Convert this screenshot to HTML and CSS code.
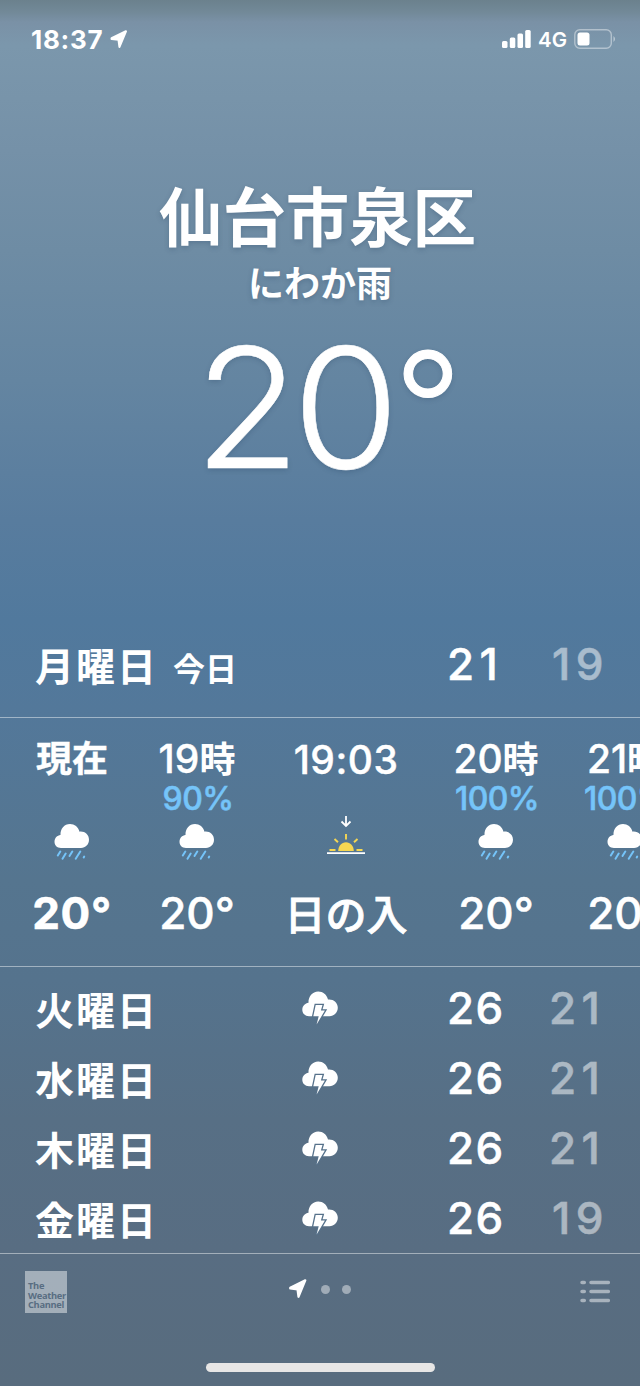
FILE: index.html
```html
<!DOCTYPE html>
<html lang="ja">
<head>
<meta charset="utf-8">
<title>天気</title>
<link rel="stylesheet" href="styles.css">
</head>
<body>
<svg class="defs" width="0" height="0" aria-hidden="true">
  <symbol id="arrow" viewBox="0 0 18 20"><path d="M1.200 8.700 16.300 1.300 9.500 17.800 8.500 10.300 1.200 9.400Z" fill="#fff" stroke="#fff" stroke-width="2.200" stroke-linejoin="round"/></symbol>
  <symbol id="rain" viewBox="0 0 36 38">
    <path d="M7 25C3 25 .5 22.300.5 18.800.5 15 3.200 12.300 6.500 12 6.200 5.800 10.300 1 16 1 20.600 1 24.300 4 25.500 8.700 30.500 8 35 11.500 35 16.800 35 21.500 31.500 25 27 25Z" fill="#fff"/>
    <path d="M6.300 28.500 3.800 32.500M11.700 30.500 8.500 35.700M18.300 28.500 15.500 33M26.300 28.500 21.700 35.700M29.700 34.400l.5-.9" stroke="#75c4f9" stroke-width="2" stroke-linecap="round"/>
  </symbol>
  <symbol id="storm" viewBox="0 0 36 35">
    <path d="M7 25.200C3 25.200.3 22.500.3 18.800.3 15 3.200 12.200 6.500 11.800 6.200 5.500 10.500.5 16.200.5 21 .5 24.800 3.500 26 8.500 31 7.800 35.800 11.500 35.800 16.700 35.800 21.500 32 25.200 27.500 25.200Z" fill="#fff"/>
    <path d="M13.700 14.100H20.500L18.900 19.500H22.900L14.600 33.500 16.700 25.200H11.300Z" fill="#fff" stroke="#56718a" stroke-width="2.600" paint-order="stroke"/>
  </symbol>
</svg>
<div class="screen">
  <header class="status">
    <span class="clock">18:37</span>
    <svg class="loc" width="18" height="19"><use href="#arrow"/></svg>
    <svg class="signal" width="29" height="18" viewBox="0 0 29 18" fill="#fff"><rect y="11" width="5.500" height="7" rx="1.500"/><rect x="7.800" y="7.500" width="5.500" height="10.500" rx="1.500"/><rect x="15.500" y="3.500" width="5.500" height="14.500" rx="1.500"/><rect x="23.200" width="5.500" height="18" rx="1.500"/></svg>
    <span class="net">4G</span>
    <svg class="battery" width="43" height="20" viewBox="0 0 43 20"><rect x=".8" y=".8" width="36.500" height="18.500" rx="5" fill="none" stroke="#fff" stroke-opacity=".42" stroke-width="1.400"/><rect x="3.500" y="3.500" width="12" height="13" rx="2.500" fill="#fff"/><path d="M39.500 7Q42.500 10 39.500 13Z" fill="#fff" fill-opacity=".5"/></svg>
  </header>

  <section class="hero">
    <h1 class="city">仙台市泉区</h1>
    <p class="condition">にわか雨</p>
    <p class="temperature"><span class="digits">20</span><span class="deg">°</span></p>
  </section>

  <section class="today">
    <div class="day-row">
      <span class="day">月曜日<span class="tag">今日</span></span>
      <span></span>
      <span class="high spaced">21</span>
      <span class="low spaced teen">19</span>
    </div>
  </section>

  <section class="hours">
    <div class="hour now"><span class="time">現在</span><span class="chance"></span><svg class="wx" width="36" height="38"><use href="#rain"/></svg><span class="temp">20°</span></div>
    <div class="hour"><span class="time">19<b>時</b></span><span class="chance">90%</span><svg class="wx" width="36" height="38"><use href="#rain"/></svg><span class="temp">20°</span></div>
    <div class="hour"><span class="time clocked">19:03</span><span class="chance"></span>
      <svg class="sun" width="40" height="46" viewBox="0 0 40 46">
        <path d="M20 5v10M15.500 10.500l4.500 4.500 4.500-4.500M1 42.200h38" fill="none" stroke="#fff" stroke-width="1.800"/>
        <path d="M12.200 40C12.200 35 15.700 31.300 20 31.300S27.800 35 27.800 40Z" fill="#f6d752"/>
        <path d="M3.500 39h6M30.500 39h6M8.500 28l3.500 3.300M31.500 28 28 31.300M20 23v5.500" stroke="#f6d752" stroke-width="1.900"/>
      </svg><span class="temp sunset">日の入</span></div>
    <div class="hour"><span class="time">20<b>時</b></span><span class="chance">100%</span><svg class="wx" width="36" height="38"><use href="#rain"/></svg><span class="temp">20°</span></div>
    <div class="hour"><span class="time">21<b>時</b></span><span class="chance">100%</span><svg class="wx" width="36" height="38"><use href="#rain"/></svg><span class="temp">20°</span></div>
  </section>

  <section class="week">
    <div class="day-row"><span class="day">火曜日</span><svg width="36" height="35"><use href="#storm"/></svg><span class="high">26</span><span class="low spaced">21</span></div>
    <div class="day-row"><span class="day">水曜日</span><svg width="36" height="35"><use href="#storm"/></svg><span class="high">26</span><span class="low spaced">21</span></div>
    <div class="day-row"><span class="day">木曜日</span><svg width="36" height="35"><use href="#storm"/></svg><span class="high">26</span><span class="low spaced">21</span></div>
    <div class="day-row"><span class="day">金曜日</span><svg width="36" height="35"><use href="#storm"/></svg><span class="high">26</span><span class="low spaced teen">19</span></div>
  </section>

  <footer class="toolbar">
    <div class="logo">The<br>Weather<br>Channel</div>
    <div class="pages"><svg width="18" height="20"><use href="#arrow"/></svg><i></i><i></i></div>
    <svg class="list" width="30" height="23" viewBox="0 0 30 23" stroke="#fff" stroke-opacity=".48" stroke-width="3.500" stroke-linecap="round"><path d="M2 2.500h2.300M11 2.500h17.300M2 11.500h2.300M11 11.500h17.300M2 20.500h2.300M11 20.500h17.300"/></svg>
  </footer>
  <div class="home"></div>
</div>
</body>
</html>
```

FILE: styles.css
```css
* { box-sizing: border-box; }
body, h1, p { margin: 0; }
body { font-family: Inter, "Noto Sans CJK JP", sans-serif; color: #fff; }
.defs { display: block; }
.screen {
  display: flex;
  flex-direction: column;
  width: 640px;
  height: 1386px;
  overflow: hidden;
  background: linear-gradient(#6b818d 0, #728998 12px, #7a91a6 22px, #7b97ac 45px, #7591a8 150px, #6e8ca4 250px, #6485a1 380px, #587c9e 520px, #51799d 620px, #53789a 710px, #55758f 880px, #55738d 980px, #576f85 1120px, #586d82 1250px, #586c7e 1386px);
}

.status { display: flex; align-items: center; height: 78px; padding: 0 23px 0 31px; }
.clock { font-size: 26px; font-weight: 700; letter-spacing: .7px; }
.loc { margin-left: 7px; }
.signal { margin-left: auto; }
.net { width: 36px; padding-left: 7px; font-size: 20.500px; font-weight: 600; }
.battery { margin-left: 7px; }

.hero { height: 551px; padding-top: 104px; text-align: center; text-shadow: 0 2px 5px rgba(30, 60, 90, .25); }
.city { height: 72px; padding-right: 5px; line-height: 72px; font-size: 63.500px; font-weight: 700; letter-spacing: -.100px; }
.condition { height: 58px; line-height: 60px; font-size: 36px; font-weight: 700; }
.temperature { display: flex; height: 190px; padding-left: 194px; line-height: 190px; font-size: 167px; font-weight: 300; -webkit-text-stroke: .5px #fff; }
.digits { letter-spacing: -8px; transform: scaleX(1.04); transform-origin: left; }
.deg { margin: -1px 0 0 10px; font-size: 150px; -webkit-text-stroke: 1px #fff; }

.today { height: 89px; border-bottom: 1px solid rgba(255, 255, 255, .45); }
.day-row {
  display: grid;
  grid-template-columns: 267px 36px 211px 91px;
  grid-template-rows: 70px;
  align-items: center;
  height: 70px;
  padding-left: 35px;
  font-size: 44px;
  font-weight: 500;
  line-height: 70px;
}
.day { height: 70px; padding-top: 6px; line-height: 64px; font-size: 39px; font-weight: 700; letter-spacing: 2px; white-space: nowrap; }
.tag { margin-left: 15px; line-height: 1; font-size: 32px; letter-spacing: 0; }
.high, .low, .chance { -webkit-text-stroke: .5px currentColor; }
.high { padding-left: 109px; letter-spacing: 1.500px; }
.low { opacity: .5; }
.spaced { letter-spacing: 5.500px; }
.teen { padding-left: 3px; }

.hours {
  display: grid;
  grid-template-columns: 144px 106px 192px 108px 150px;
  height: 249px;
  padding-top: 18px;
  border-bottom: 1px solid rgba(255, 255, 255, .45);
}
.hour { display: grid; grid-template-rows: 47px 32px 50px 96px; justify-items: center; align-items: center; white-space: nowrap; }
.time { line-height: 47px; font-size: 39px; font-weight: 500; -webkit-text-stroke: .4px #fff; }
.time b { font-size: 36px; font-weight: 700; -webkit-text-stroke: 0; }
.clocked { letter-spacing: .500px; }
.now .time { font-size: 36px; font-weight: 700; }
.chance { padding-left: 2px; line-height: 32px; font-size: 32px; font-weight: 500; letter-spacing: -.600px; color: #75c4f9; }
.wx { margin-top: 4px; }
.sun { margin-top: -13px; }
.temp { line-height: 96px; font-size: 44px; font-weight: 500; -webkit-text-stroke: .5px #fff; }
.now .temp { font-weight: 700; letter-spacing: .600px; }
.temp.sunset { padding-top: 3px; font-size: 41px; -webkit-text-stroke: .8px #fff; }

.week { height: 287px; padding-top: 6px; border-bottom: 1px solid rgba(255, 255, 255, .45); }

.toolbar { display: grid; grid-template-columns: 264px 1fr 30px; height: 109px; padding: 17px 30px 0 25px; }
.logo { width: 42px; height: 42px; padding: 10px 0 0 3px; background: rgba(255, 255, 255, .45); color: #586d82; font: 700 9.300px/9.700px "Open Sans", sans-serif; letter-spacing: -.300px; white-space: nowrap; }
.pages { display: flex; align-items: center; gap: 12px; height: 36px; }
.pages svg { margin-right: 2px; }
.pages i { width: 9px; height: 9px; border-radius: 50%; background: rgba(255, 255, 255, .43); }
.list { margin-top: 9px; }
.home { width: 229px; height: 9px; margin: 0 auto; border-radius: 5px; background: #e7e6e5; }
```
